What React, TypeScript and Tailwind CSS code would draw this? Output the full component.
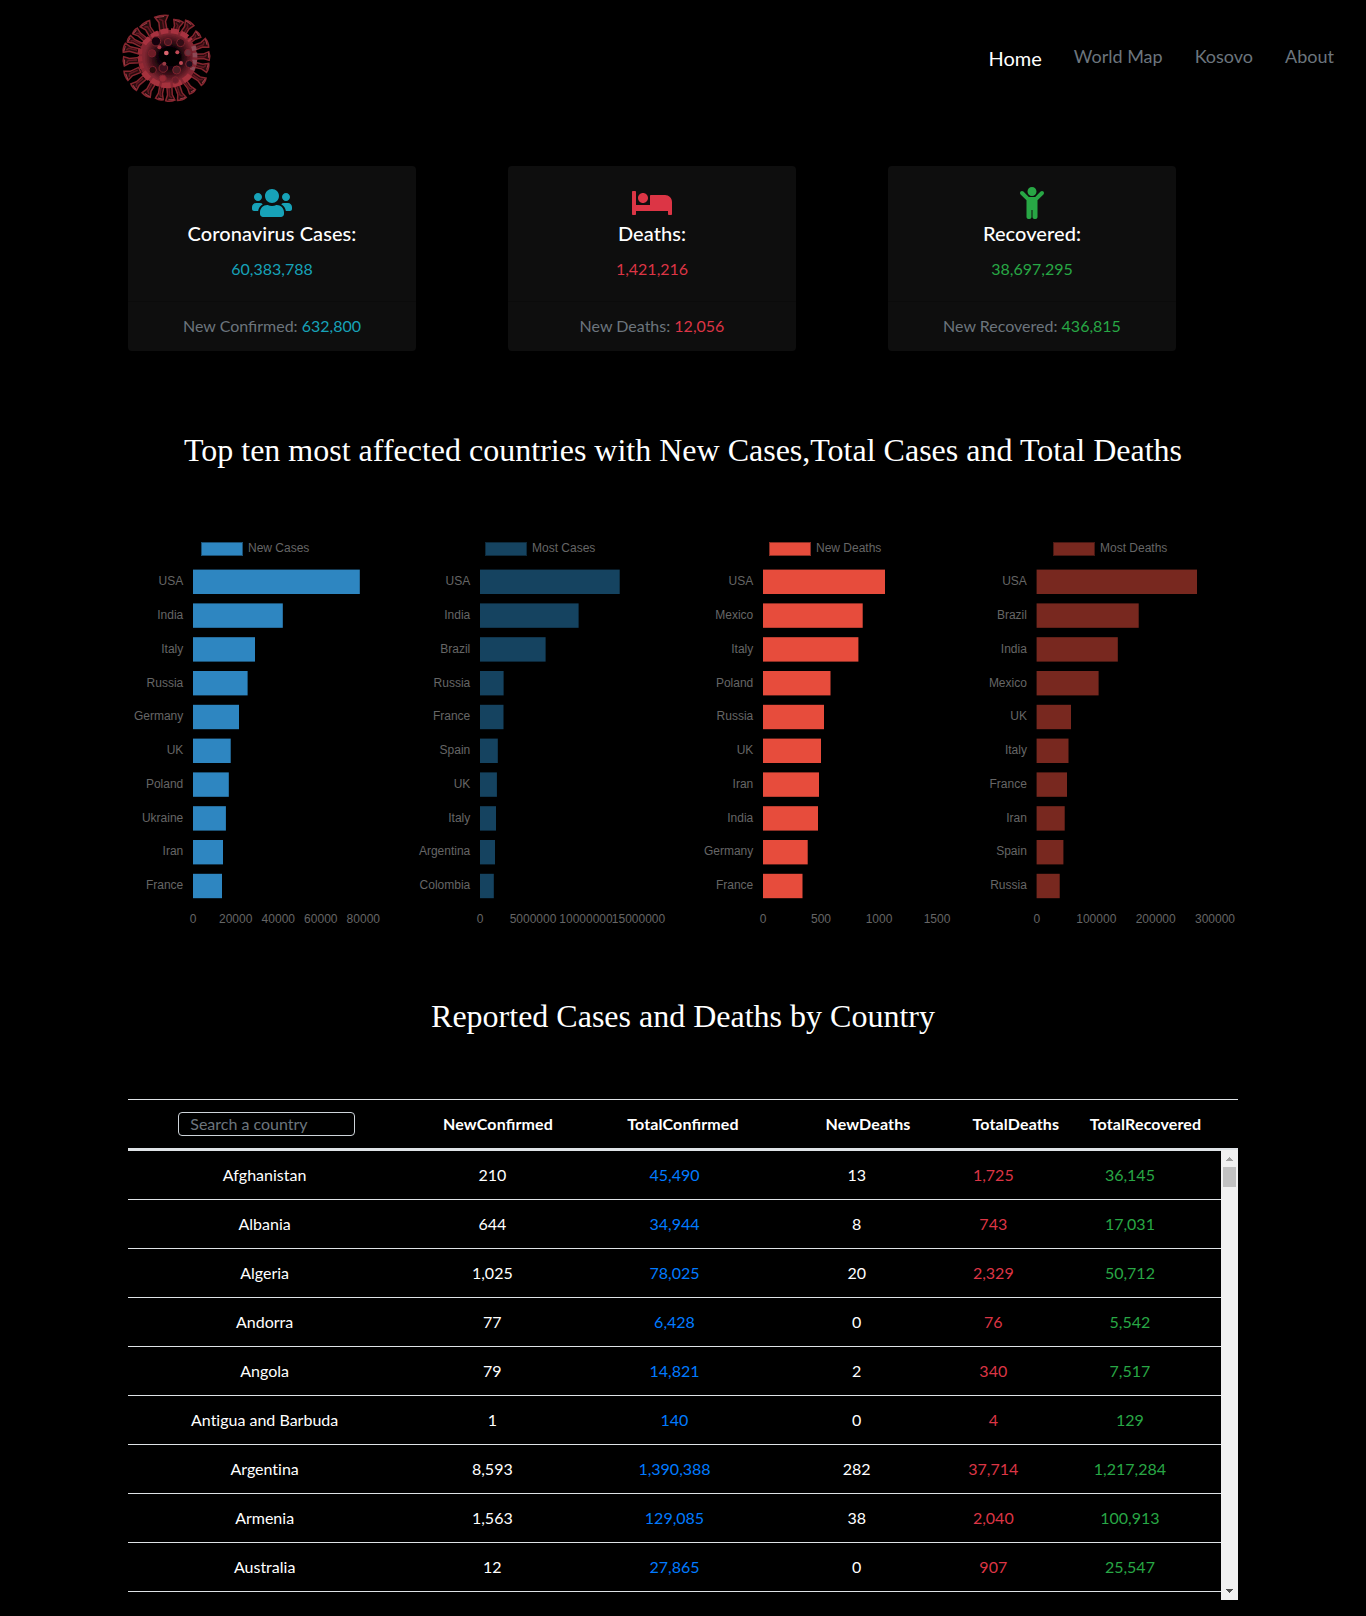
import React from "react";
import { FaBed, FaChild, FaUsers } from "react-icons/fa";

const SPIKES: [number, number, number][] = [
  [184, 48, 20],
  [134, 70, 17],
  [236, 62, 15],
  [270, 68, 15],
  [104, 92, 11],
  [86, 116, 11],
  [72, 143, 14],
  [71, 184, 14],
  [77, 228, 15],
  [100, 262, 13],
  [138, 286, 14],
  [178, 298, 12],
  [211, 302, 14],
  [246, 298, 14],
  [278, 276, 11],
  [312, 246, 13],
  [324, 204, 14],
  [328, 168, 13],
  [322, 128, 14],
  [296, 102, 12],
];

const BUMPS: [number, number, number, string][] = [
  [168, 124, 14, "#14060a"],
  [204, 126, 11, "#4c1620"],
  [242, 128, 12, "#310c14"],
  [264, 158, 10, "#6a303c"],
  [156, 160, 11, "#6d1a26"],
  [158, 210, 11, "#2a090f"],
  [190, 204, 13, "#3c111a"],
  [230, 210, 12, "#4a1a24"],
  [268, 192, 11, "#24101a"],
  [188, 236, 11, "#962936"],
  [226, 240, 10, "#6b1f2a"],
];

function VirusLogo() {
  return (
    <svg width="140" height="120" viewBox="0 0 420 360" aria-label="Coronavirus">
      <defs>
        <radialGradient id="body" cx="0.52" cy="0.48" r="0.5">
          <stop offset="0" stopColor="#000" />
          <stop offset="0.4" stopColor="#12040a" />
          <stop offset="0.6" stopColor="#42111a" />
          <stop offset="0.84" stopColor="#802631" />
          <stop offset="1" stopColor="#8a2630" />
        </radialGradient>
        <filter id="soft">
          <feGaussianBlur stdDeviation="2" />
        </filter>
      </defs>
      <g filter="url(#soft)">
        {SPIKES.map(([x, y, w], i) => {
          const angle = (Math.atan2(y - 174, x - 202) * 180) / Math.PI + 90;
          return (
            <g key={i} transform={`translate(${x} ${y}) rotate(${angle})`}>
              <path
                d={`M${-w} 1 Q0 -4 ${w} 1 L${w * 0.5} 18 L${w * 0.55} 46 L${-w * 0.55} 46 L${-w * 0.5} 18 Z`}
                fill="#26080d"
                stroke="#86262f"
                strokeWidth="4.5"
              />
              <path d={`M${-w * 0.8} 2 L${w * 0.4} 3`} fill="none" stroke="#9c3f49" strokeWidth="3" />
              <path d={`M${-w * 0.4} 8 L${w * 0.1} 14 L${w * 0.1} 40`} fill="none" stroke="#5e1620" strokeWidth="5" />
            </g>
          );
        })}
        <ellipse cx="204" cy="176" rx="88" ry="87" fill="url(#body)" />
        <path d="M132 132 Q160 96 204 92 Q250 92 272 122" fill="none" stroke="#a8333f" strokeWidth="15" strokeDasharray="24 7" />
        <path d="M130 216 Q160 256 204 256 Q250 254 274 220" fill="none" stroke="#a5303d" strokeWidth="17" strokeDasharray="27 7" />
        <path d="M121 146 Q116 184 130 212" fill="none" stroke="#972b36" strokeWidth="13" strokeDasharray="16 6" />
        <path d="M280 138 Q292 172 276 210" fill="none" stroke="#8c4a56" strokeWidth="14" strokeDasharray="14 7" />
        {BUMPS.map(([x, y, r, c], i) => (
          <circle key={i} cx={x} cy={y} r={r} fill={c} stroke="#7c232d" strokeWidth="3" />
        ))}
        <path d="M182 150 Q212 130 238 152 Q250 176 232 194 Q206 204 188 188 Q166 170 182 150" fill="#040102" />
        <g fill="#d9656e">
          <circle cx="199" cy="159" r="7" />
          <circle cx="232" cy="157" r="6" fill="#c04a55" />
          <circle cx="243" cy="189" r="6" fill="#c04a55" />
          <circle cx="193" cy="191" r="6" fill="#9a3a44" />
          <circle cx="178" cy="142" r="6" fill="#a83541" />
        </g>
      </g>
    </svg>
  );
}

const NAV = ["World Map", "Kosovo", "About"];

const CARDS = [
  {
    title: "Coronavirus Cases:",
    total: "60,383,788",
    label: "New Confirmed:",
    fresh: "632,800",
    tone: "text-[#17a2b8]",
    icon: <FaUsers className="h-8 w-10" />,
  },
  {
    title: "Deaths:",
    total: "1,421,216",
    label: "New Deaths:",
    fresh: "12,056",
    tone: "text-[#dc3545]",
    icon: <FaBed className="h-8 w-10" />,
  },
  {
    title: "Recovered:",
    total: "38,697,295",
    label: "New Recovered:",
    fresh: "436,815",
    tone: "text-[#28a745]",
    icon: <FaChild className="h-8 w-6" />,
  },
];

type Chart = {
  name: string;
  fill: string;
  edge: string;
  x0: number;
  bars: [string, number][];
  ticks: [string, number][];
};

const CHARTS: Chart[] = [
  {
    name: "New Cases",
    fill: "#2e86c1",
    edge: "#1b5074",
    x0: 65,
    bars: [
      ["USA", 166.8], ["India", 89.8], ["Italy", 62], ["Russia", 54.6], ["Germany", 46],
      ["UK", 37.7], ["Poland", 35.8], ["Ukraine", 32.9], ["Iran", 30], ["France", 29],
    ],
    ticks: [["0", 65.2], ["20000", 107.7], ["40000", 150.3], ["60000", 192.8], ["80000", 235.3]],
  },
  {
    name: "Most Cases",
    fill: "#154360",
    edge: "#0d2a3c",
    x0: 68,
    bars: [
      ["USA", 139.7], ["India", 98.6], ["Brazil", 65.6], ["Russia", 23.6], ["France", 23.5],
      ["Spain", 17.8], ["UK", 16.9], ["Italy", 16], ["Argentina", 15], ["Colombia", 13.8],
    ],
    ticks: [["0", 68.2], ["5000000", 121], ["10000000", 174], ["15000000", 226.5]],
  },
  {
    name: "New Deaths",
    fill: "#e74c3c",
    edge: "#8b2e24",
    x0: 67,
    bars: [
      ["USA", 122], ["Mexico", 99.7], ["Italy", 95.4], ["Poland", 67.5], ["Russia", 61],
      ["UK", 58], ["Iran", 56], ["India", 55], ["Germany", 44.7], ["France", 39.5],
    ],
    ticks: [["0", 67.2], ["500", 125], ["1000", 183], ["1500", 241]],
  },
  {
    name: "Most Deaths",
    fill: "#78281f",
    edge: "#481813",
    x0: 56.6,
    bars: [
      ["USA", 160.4], ["Brazil", 102.1], ["India", 81.2], ["Mexico", 62], ["UK", 34.4],
      ["Italy", 31.9], ["France", 30.4], ["Iran", 28.1], ["Spain", 26.8], ["Russia", 23.1],
    ],
    ticks: [["0", 56.8], ["100000", 116.3], ["200000", 175.7], ["300000", 235]],
  },
];

function BarChart({ chart }: { chart: Chart }) {
  return (
    <svg
      width="284"
      height="400"
      viewBox="0 0 284 400"
      className="overflow-visible font-['Liberation_Sans',Arial,sans-serif] text-[12px]"
      fill="#666"
    >
      <rect x="73.5" y="12.5" width="41" height="13" fill={chart.fill} stroke={chart.edge} />
      <text x="120" y="22">{chart.name}</text>
      {chart.bars.map(([label, width], i) => (
        <g key={label}>
          <text x={chart.x0 - 9.7} y={Math.round(55.2 + i * 33.78)} textAnchor="end">{label}</text>
          <rect x={chart.x0} y={39.6 + i * 33.8} width={width} height="24.4" fill={chart.fill} />
        </g>
      ))}
      {chart.ticks.map(([label, x]) => (
        <text key={label} x={x} y="393" textAnchor="middle">{label}</text>
      ))}
    </svg>
  );
}

const ROWS = [
  ["Afghanistan", "210", "45,490", "13", "1,725", "36,145"],
  ["Albania", "644", "34,944", "8", "743", "17,031"],
  ["Algeria", "1,025", "78,025", "20", "2,329", "50,712"],
  ["Andorra", "77", "6,428", "0", "76", "5,542"],
  ["Angola", "79", "14,821", "2", "340", "7,517"],
  ["Antigua and Barbuda", "1", "140", "0", "4", "129"],
  ["Argentina", "8,593", "1,390,388", "282", "37,714", "1,217,284"],
  ["Armenia", "1,563", "129,085", "38", "2,040", "100,913"],
  ["Australia", "12", "27,865", "0", "907", "25,547"],
];

function CountryTable() {
  return (
    <section className="w-[1110px] border-t border-[#dee2e6]">
      <div className="grid h-12 grid-cols-12 items-center text-center font-bold tracking-[0.13px] [font-feature-settings:'liga']">
        <div className="col-span-3 flex justify-center">
          <input
            placeholder="Search a country"
            className="h-6 w-[177px] rounded-[4px] border border-[#ced4da] bg-black px-[11px] text-base tracking-normal placeholder:font-normal placeholder:text-[#6c757d]"
          />
        </div>
        <div className="col-span-2 px-3">NewConfirmed</div>
        <div className="col-span-2 px-3">TotalConfirmed</div>
        <div className="col-span-2 px-3">NewDeaths</div>
        <div className="px-3">TotalDeaths</div>
        <div className="col-span-2 px-3">TotalRecovered</div>
      </div>
      <div className="h-0.5 bg-[#dee2e6]" />
      <div className="flex h-[450px]">
        <div className="flex-1 overflow-hidden">
          {ROWS.map((row) => (
            <div key={row[0]} className="grid h-[49px] grid-cols-12 items-center border-t border-[#dee2e6] text-center">
              <div className="col-span-3 [font-variant-ligatures:none]">{row[0]}</div>
              <div className="col-span-2">{row[1]}</div>
              <div className="col-span-2 text-[#007bff]">{row[2]}</div>
              <div className="col-span-2">{row[3]}</div>
              <div className="text-[#dc3545]">{row[4]}</div>
              <div className="col-span-2 text-[#28a745]">{row[5]}</div>
            </div>
          ))}
          <div className="border-t border-[#dee2e6]" />
        </div>
        <div className="flex w-[17px] flex-col items-center bg-[#f1f1f1]">
          <svg width="17" height="17" shapeRendering="crispEdges" fill="#a3a3a3">
            <path d="M8 7h1v1h1v1h1v1h1v1H5v-1h1V9h1V8h1z" />
          </svg>
          <div className="h-5 w-[13px] bg-[#c1c1c1]" />
          <svg className="mt-auto" width="17" height="17" shapeRendering="crispEdges" fill="#505050">
            <path d="M5 6h7v1h-1v1h-1v1H9v1H8V9H7V8H6V7H5z" />
          </svg>
        </div>
      </div>
    </section>
  );
}

export default function App() {
  return (
    <div className="h-[1616px] w-[1366px] overflow-hidden bg-black font-[Lato,sans-serif] text-base text-white">
      <header className="flex h-[166px] items-start justify-between pr-8 pl-[100px]">
        <VirusLogo />
        <nav className="flex items-start gap-8 pt-[43px] text-lg leading-[27px] text-[#6c757d]">
          <a className="text-xl leading-[30px] text-white">Home</a>
          {NAV.map((item) => (
            <a key={item}>{item}</a>
          ))}
        </nav>
      </header>

      <main className="pl-32">
        <section className="flex gap-[92px]">
          {CARDS.map((card) => (
            <article key={card.title} className="h-[185px] w-72 rounded-[4px] bg-[#0e0e0e] pt-px text-center">
              <div className="flex h-[134px] flex-col items-center pt-5">
                <div className={`h-[34px] ${card.tone}`}>{card.icon}</div>
                <h5 className="mb-3 text-xl leading-6 font-medium tracking-[0.07px]">{card.title}</h5>
                <p className={card.tone}>{card.total}</p>
              </div>
              <div className="border-t border-[#0b0b0b] py-3 text-[#6c757d]">
                {card.label} <span className={card.tone}>{card.fresh}</span>
              </div>
            </article>
          ))}
        </section>

        <h2 className="mt-[79px] w-[1110px] text-center font-['Liberation_Serif',serif] text-[32px] leading-10">
          Top ten most affected countries with New Cases,Total Cases and Total Deaths
        </h2>

        <section className="mt-[60px] flex">
          {CHARTS.map((chart) => (
            <BarChart key={chart.name} chart={chart} />
          ))}
        </section>

        <h2 className="mt-[66px] mb-[63px] w-[1110px] text-center font-['Liberation_Serif',serif] text-[32px] leading-10">
          Reported Cases and Deaths by Country
        </h2>

        <CountryTable />
      </main>
    </div>
  );
}
